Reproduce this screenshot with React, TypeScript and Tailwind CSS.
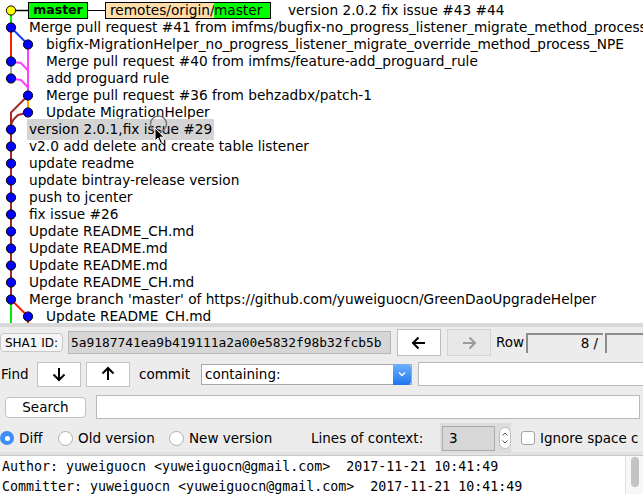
import React from 'react'

const ROW = 17
const cy = (i: number) => 10.5 + ROW * i
const C0 = 11
const C1 = 28

interface Commit {
  text: string
  indent: 0 | 1
  col: 0 | 1
  selected?: boolean
}

const commits: Commit[] = [
  { text: 'Merge pull request #41 from imfms/bugfix-no_progress_listener_migrate_method_process', indent: 0, col: 0 },
  { text: 'bigfix-MigrationHelper_no_progress_listener_migrate_override_method_process_NPE', indent: 1, col: 1 },
  { text: 'Merge pull request #40 from imfms/feature-add_proguard_rule', indent: 1, col: 0 },
  { text: 'add proguard rule', indent: 1, col: 0 },
  { text: 'Merge pull request #36 from behzadbx/patch-1', indent: 1, col: 1 },
  { text: 'Update MigrationHelper', indent: 1, col: 1 },
  { text: 'version 2.0.1,fix issue #29', indent: 0, col: 0, selected: true },
  { text: 'v2.0 add delete and create table listener', indent: 0, col: 0 },
  { text: 'update readme', indent: 0, col: 0 },
  { text: 'update bintray-release version', indent: 0, col: 0 },
  { text: 'push to jcenter', indent: 0, col: 0 },
  { text: 'fix issue #26', indent: 0, col: 0 },
  { text: 'Update README_CH.md', indent: 0, col: 0 },
  { text: 'Update README.md', indent: 0, col: 0 },
  { text: 'Update README.md', indent: 0, col: 0 },
  { text: 'Update README_CH.md', indent: 0, col: 0 },
  { text: "Merge branch 'master' of https://github.com/yuweiguocn/GreenDaoUpgradeHelper", indent: 0, col: 0 },
  { text: 'Update README_CH.md', indent: 1, col: 1 },
]

// graph edges: [colour, points]
const edges: [string, string][] = [
  ['#00ee00', `${C0},${cy(0)} ${C0},${cy(1)}`],
  ['#ff2200', `${C0},${cy(1)} ${C0},${cy(3)}`],
  ['#a9a9a9', `${C0},${cy(3)} ${C0},${cy(4)}`],
  ['#1040ff', `${C0},${cy(1)} ${C1},${cy(2)}`],
  ['#ff40ff', `${C1},${cy(2)} ${C1},${cy(5)}`],
  ['#ff40ff', `${C0},${cy(3)} 21,${cy(3) + 1.5} ${C1},${cy(3) + 9}`],
  ['#ff40ff', `${C0},${cy(4)} 21,${cy(4) + 1.5} ${C1},${cy(4) + 9}`],
  ['#ffa500', `${C1},${cy(5)} ${C1},${cy(6)}`],
  ['#a52a2a', `${C1},${cy(5)} ${C0},${cy(6)} ${C0},${cy(17)}`],
  ['#a52a2a', `${C1},${cy(6)} 18,${cy(6) + 2.5} 13.5,${cy(6) + 7} ${C0},${cy(6) + 12}`],
  ['#00ee00', `${C0},${cy(17)} ${C0},340`],
  ['#ff2200', `${C0},${cy(17)} ${C1},${cy(18)} ${C1},340`],
]

function Graph() {
  return (
    <svg className="absolute left-0 top-0" width={40} height={330} viewBox="0 0 40 330">
      <line x1={C0} y1={cy(0)} x2={28} y2={cy(0)} stroke="#000" strokeWidth={1.5} />
      {edges.map(([c, p], i) => (
        <polyline key={i} points={p} fill="none" stroke={c} strokeWidth={2} strokeLinejoin="round" />
      ))}
      <circle cx={C0} cy={cy(0)} r={4.6} fill="#ffff00" stroke="#000" strokeWidth={1} />
      {commits.map((c, i) => (
        <circle
          key={i}
          cx={c.col ? C1 : C0}
          cy={cy(i + 1)}
          r={4.6}
          fill="#0000ff"
          stroke="#000"
          strokeWidth={1}
        />
      ))}
    </svg>
  )
}

function Arrow({ dir, color = '#000' }: { dir: 'up' | 'down' | 'left' | 'right'; color?: string }) {
  const rot = { up: 0, right: 90, down: 180, left: 270 }[dir]
  return (
    <svg width="16" height="16" viewBox="0 0 16 16" style={{ transform: `rotate(${rot}deg)` }}>
      <path d="M8 2 L8 14 M2.5 7.5 L8 2 L13.5 7.5" fill="none" stroke={color} strokeWidth={2} />
    </svg>
  )
}

function Radio({ on, label, w }: { on?: boolean; label: string; w: string }) {
  return (
    <div className={`flex shrink-0 items-center ${w}`}>
      {on ? (
        <div className="flex h-[14px] w-[14px] items-center justify-center rounded-full bg-[#3d8ef7]">
          <div className="h-[5px] w-[5px] rounded-full bg-white" />
        </div>
      ) : (
        <div className="h-[15px] w-[15px] rounded-full border border-[#b0b0b0] bg-white" />
      )}
      <span className="ml-[5px]">{label}</span>
    </div>
  )
}

export default function App() {
  return (
    <div className="h-[494px] w-[643px] overflow-hidden bg-[#ececec] font-['DejaVu_Sans',sans-serif] text-[13.5px] text-black">
      {/* commit graph */}
      <div className="relative h-[323px] overflow-hidden bg-white text-[13.7px]">
        <Graph />
        <div className="relative pt-[2px]">
          <div className="flex h-[17px] items-center whitespace-nowrap pl-[28px]">
            <div className="flex h-[17px] w-[60px] shrink-0 items-center justify-center border border-black bg-[#00ff00] text-[12.5px] font-bold">
              master
            </div>
            <div className="h-[1.5px] w-[17px] shrink-0 bg-black" />
            <div className="flex h-[17px] w-[166px] shrink-0 border border-black">
              <span className="flex w-[108px] items-center bg-[#ffddaa] pl-[4px]">remotes/origin/</span>
              <span className="flex flex-1 items-center bg-[#00ff00]">master</span>
            </div>
            <span className="ml-[17px]">version 2.0.2 fix issue #43 #44</span>
          </div>
          {commits.map((c, i) => (
            <div
              key={i}
              className={`flex h-[17px] items-center whitespace-nowrap ${c.indent ? 'pl-[46px]' : 'pl-[27px]'}`}
            >
              <span className={c.selected ? 'bg-[#d4d4d4] px-[2px]' : c.indent ? '' : 'pl-[2px]'}>{c.text}</span>
            </div>
          ))}
        </div>
        {/* mouse pointer over the selected row */}
        <svg className="absolute left-[148px] top-[113px]" width="22" height="34" viewBox="0 0 22 34">
          <circle cx="10.5" cy="11" r="8" fill="none" stroke="#7a7a7a" strokeWidth="1.5" />
          <path d="M7 15 L7 28 L10 25 L12.5 30.5 L14.5 29.5 L12 24.2 L16 24.2 Z" fill="#000" stroke="#fff" strokeWidth="1" />
        </svg>
      </div>
      <div className="h-[4px] bg-[#d8d8d8]" />

      {/* SHA1 row */}
      <div className="flex h-[31px] items-center whitespace-nowrap">
        <div className="flex h-[19px] w-[63px] shrink-0 items-center justify-center rounded-[4px] border border-[#c6c6c6] bg-[#f6f6f6] text-[12px]">
          SHA1 ID:
        </div>
        <div className="ml-[5px] flex h-[23px] w-[323px] shrink-0 items-center border border-[#b8b8b8] bg-[#d6d6d6] pl-[2px] font-['DejaVu_Sans_Mono',monospace] text-[12.9px]">
          5a9187741ea9b419111a2a00e5832f98b32fcb5b
        </div>
        <div className="ml-[6px] flex h-[27px] w-[44px] shrink-0 items-center justify-center border border-[#bdbdbd] bg-white">
          <Arrow dir="left" />
        </div>
        <div className="ml-[6px] flex h-[27px] w-[44px] shrink-0 items-center justify-center border border-[#d4d4d4] bg-[#e8e8e8]">
          <Arrow dir="right" color="#9a9a9a" />
        </div>
        <span className="ml-[5px] shrink-0">Row</span>
        <div className="ml-[2px] flex h-[20px] w-[77px] shrink-0 items-center justify-end border-l-2 border-t-2 border-[#8c8c8c] pr-[5px]">
          8 /
        </div>
        <div className="ml-[2px] h-[20px] w-[60px] shrink-0 border-l-2 border-t-2 border-[#8c8c8c]" />
      </div>

      {/* Find row */}
      <div className="flex h-[32px] items-center whitespace-nowrap">
        <span className="w-[37px] shrink-0 pl-[1px]">Find</span>
        <div className="flex h-[25px] w-[44px] shrink-0 items-center justify-center border border-[#c4c4c4] bg-white">
          <Arrow dir="down" />
        </div>
        <div className="ml-[5px] flex h-[25px] w-[44px] shrink-0 items-center justify-center border border-[#c4c4c4] bg-white">
          <Arrow dir="up" />
        </div>
        <span className="ml-[9px] w-[62px] shrink-0">commit</span>
        <div className="flex h-[21px] w-[211px] shrink-0 items-center border border-[#a8a8a8] bg-white">
          <span className="flex-1 pl-[3px]">containing:</span>
          <div className="flex h-[21px] w-[18px] items-center justify-center rounded-r-[4px] bg-gradient-to-b from-[#6cb0fb] to-[#1f74f0]">
            <svg width="8" height="6" viewBox="0 0 8 6">
              <path d="M1 1.5 L4 4.5 L7 1.5" fill="none" stroke="#fff" strokeWidth="1.3" />
            </svg>
          </div>
        </div>
        <div className="ml-[6px] h-[24px] w-[240px] shrink-0 border border-[#b8b8b8] bg-white" />
      </div>

      {/* Search row */}
      <div className="flex h-[34px] items-center whitespace-nowrap">
        <div className="ml-[5px] flex h-[21px] w-[81px] shrink-0 items-center justify-center rounded-[4px] border border-[#c2c2c2] bg-white">
          Search
        </div>
        <div className="ml-[10px] h-[24px] w-[544px] shrink-0 border border-[#b8b8b8] bg-white" />
      </div>

      {/* diff options row */}
      <div className="flex h-[28px] items-center whitespace-nowrap">
        <Radio on label="Diff" w="w-[58px]" />
        <Radio label="Old version" w="w-[111px]" />
        <Radio label="New version" w="w-[142px]" />
        <span className="w-[129px] shrink-0">Lines of context:</span>
        <div className="flex h-[30px] w-[71px] shrink-0 items-center bg-[#dddddd] pl-[2px]">
          <div className="flex h-[25px] w-[53px] items-center border border-[#ababab] bg-[#d7d7d7] pl-[6px]">3</div>
          <div className="ml-[4px] flex h-[22px] w-[12px] flex-col items-center justify-center rounded-full border border-[#c0c0c0] bg-white">
            <svg width="8" height="16" viewBox="0 0 8 16">
              <path d="M1.5 5.5 L4 3 L6.5 5.5 M1.5 10.5 L4 13 L6.5 10.5" fill="none" stroke="#555" strokeWidth="1" />
            </svg>
          </div>
        </div>
        <div className="ml-[10px] h-[14px] w-[14px] shrink-0 rounded-[3px] border border-[#a6a6a6] bg-white" />
        <span className="ml-[5px]">Ignore space c</span>
      </div>
      <div className="h-[3px] bg-[#e2e2e2]" />

      {/* commit details */}
      <div className="flex h-[40px] border-t border-[#c9c9c9] bg-white">
        <div className="w-[625px] shrink-0 whitespace-pre pl-[2px] pt-[1px] font-['DejaVu_Sans_Mono',monospace] text-[13.3px] leading-[20px]">
          <div>Author: yuweiguocn &lt;yuweiguocn@gmail.com&gt;  2017-11-21 10:41:49</div>
          <div>Committer: yuweiguocn &lt;yuweiguocn@gmail.com&gt;  2017-11-21 10:41:49</div>
        </div>
        <div className="flex-1 border-l border-[#e0e0e0] bg-[#f7f7f7] pl-[5px] pt-[1px]">
          <div className="h-[30px] w-[8px] rounded-full bg-[#c3c3c3]" />
        </div>
      </div>
    </div>
  )
}
